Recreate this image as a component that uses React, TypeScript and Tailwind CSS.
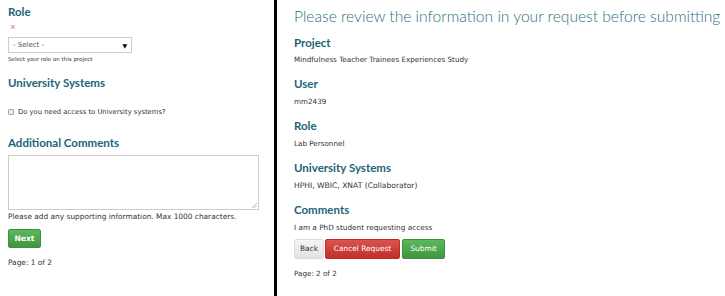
import React from "react";

const H = "font-['Lato',sans-serif] font-bold text-[#1b6577] text-[11.5px] leading-[14px]";
const B = "font-['DejaVu_Sans',Verdana,sans-serif] text-[#333]";

export default function App() {
  return (
    <div className="flex w-[725px] h-[296px] bg-white overflow-hidden">
      <div className="w-[274px] shrink-0 pl-2 pr-[14px]">
        <div className={`${H} mt-[5px]`}>Role</div>
        <div className="text-[#d9534f] text-[7px] leading-[8px] mt-[4px] ml-[2px] font-['DejaVu_Sans',sans-serif]">×</div>
        <div className={`${B} mt-[6px] w-[124px] h-[16px] border border-[#ccc] flex items-center justify-between px-[4px] text-[7px]`}>
          <span className="text-[#555]">- Select -</span>
          <span className="text-[6px] text-black">▼</span>
        </div>
        <div className={`${B} text-[5.5px] leading-[8px] mt-[2px]`}>Select your role on this project</div>
        <div className={`${H} mt-[13px]`}>University Systems</div>
        <div className={`${B} flex items-center mt-[17px] text-[6.8px] leading-[10px]`}>
          <span className="w-[6px] h-[6px] border border-[#aaa] bg-[#eee] rounded-[1px] mr-[4px]"></span>
          <span>Do you need access to University systems?</span>
        </div>
        <div className={`${H} mt-[19px]`}>Additional Comments</div>
        <div className="relative mt-[5px] w-[251px] h-[55px] border border-[#ccc]">
          <svg className="absolute right-[1px] bottom-[1px]" width="5" height="5" viewBox="0 0 5 5">
            <path d="M5 0 L0 5 M5 2.5 L2.5 5" stroke="#999" strokeWidth="0.7" />
          </svg>
        </div>
        <div className={`${B} text-[7.4px] leading-[10px] mt-[2px]`}>Please add any supporting information. Max 1000 characters.</div>
        <button className="mt-[7px] w-[33px] h-[19px] rounded-[2px] bg-gradient-to-b from-[#5cb85c] to-[#419641] border border-[#3e8f3e] text-white font-['DejaVu_Sans',sans-serif] text-[7.6px] font-semibold flex items-center justify-center">Next</button>
        <div className={`${B} text-[7.4px] leading-[10px] mt-[10px]`}>Page: 1 of 2</div>
      </div>
      <div className="w-[3px] shrink-0 bg-black"></div>
      <div className="flex-1 pl-[17px]">
        <div className="font-['Lato',sans-serif] font-light text-[#2c6f80] text-[15.6px] leading-[20px] mt-[6px] whitespace-nowrap">Please review the information in your request before submitting</div>
        <div className={`${H} mt-[10px]`}>Project</div>
        <div className={`${B} text-[7.2px] leading-[10px] mt-[5px]`}>Mindfulness Teacher Trainees Experiences Study</div>
        <div className={`${H} mt-[12px]`}>User</div>
        <div className={`${B} text-[7.2px] leading-[10px] mt-[6px]`}>mm2439</div>
        <div className={`${H} mt-[12px]`}>Role</div>
        <div className={`${B} text-[7.2px] leading-[10px] mt-[6px]`}>Lab Personnel</div>
        <div className={`${H} mt-[12px]`}>University Systems</div>
        <div className={`${B} text-[7.6px] leading-[10px] mt-[6px]`}>HPHI, WBIC, XNAT (Collaborator)</div>
        <div className={`${H} mt-[12px]`}>Comments</div>
        <div className={`${B} text-[7.3px] leading-[10px] mt-[6px]`}>I am a PhD student requesting access</div>
        <div className="flex mt-[6px] h-[20px] font-['DejaVu_Sans',sans-serif] text-[7.4px]">
          <button className="w-[30px] h-full rounded-[2px] bg-gradient-to-b from-[#f4f4f4] to-[#e2e2e2] border border-[#ddd] text-[#333] flex items-center justify-center">Back</button>
          <button className="ml-[1px] w-[75px] h-full rounded-[2px] bg-gradient-to-b from-[#d9534f] to-[#c12e2a] border border-[#b92c28] text-white flex items-center justify-center">Cancel Request</button>
          <button className="ml-[2px] w-[43px] h-full rounded-[2px] bg-gradient-to-b from-[#5cb85c] to-[#419641] border border-[#3e8f3e] text-white flex items-center justify-center">Submit</button>
        </div>
        <div className={`${B} text-[7.2px] leading-[10px] mt-[10px]`}>Page: 2 of 2</div>
      </div>
    </div>
  );
}
